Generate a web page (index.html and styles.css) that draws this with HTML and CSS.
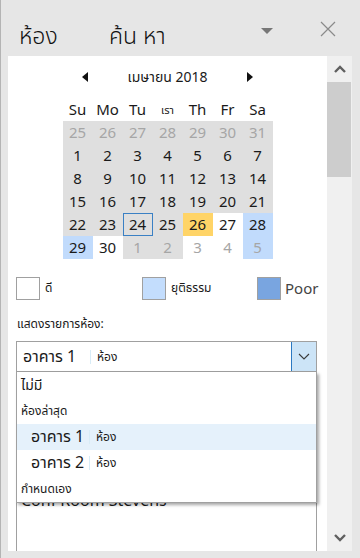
FILE: index.html
```html
<!DOCTYPE html>
<html>
<head>
<meta charset="UTF-8">
<title>Rooms</title>
<meta name="viewport" content="width=device-width, initial-scale=1.0">
<link rel="stylesheet" href="styles.css">
</head>
<body>
<div class="header">
  <span class="title">ห้อง</span>
  <span class="title search">ค้น หา</span>
  <span class="caret"></span>
  <svg class="close" width="16" height="16" viewBox="0 0 16 16"><path d="M1 1 L15 15 M15 1 L1 15" stroke="#8a8a8a" stroke-width="1.2" fill="none"/></svg>
</div>
<div class="main">
  <div class="panel">
    <div class="calendar">
      <div class="month">
        <span class="arrow prev"></span>
        <span class="month-name">เมษายน 2018</span>
        <span class="arrow next"></span>
      </div>
      <div class="weekdays">
        <span>Su</span><span>Mo</span><span>Tu</span><span class="thai">เรา</span><span>Th</span><span>Fr</span><span>Sa</span>
      </div>
      <div class="grid">
        <span class="out">25</span><span class="out">26</span><span class="out">27</span><span class="out">28</span><span class="out">29</span><span class="out">30</span><span class="out">31</span>
        <span>1</span><span>2</span><span>3</span><span>4</span><span>5</span><span>6</span><span>7</span>
        <span>8</span><span>9</span><span>10</span><span>11</span><span>12</span><span>13</span><span>14</span>
        <span>15</span><span>16</span><span>17</span><span>18</span><span>19</span><span>20</span><span>21</span>
        <span>22</span><span>23</span><span class="today">24</span><span>25</span><span class="busy">26</span><span class="free">27</span><span class="fair">28</span>
        <span class="fair">29</span><span class="free">30</span><span class="out">1</span><span class="out">2</span><span class="out free">3</span><span class="out free">4</span><span class="out fair">5</span>
      </div>
    </div>
    <div class="legend">
      <div class="key good"><span class="swatch"></span><span class="key-text">ดี</span></div>
      <div class="key mid"><span class="swatch fair"></span><span class="key-text">ยุติธรรม</span></div>
      <div class="key bad"><span class="swatch poor"></span><span class="key-text latin">Poor</span></div>
    </div>
    <div class="label">แสดงรายการห้อง:</div>
    <div class="select">
      <span class="building">อาคาร 1</span>
      <span class="sep"></span>
      <span class="room">ห้อง</span>
      <span class="select-btn">
        <svg width="12" height="8" viewBox="0 0 12 8"><path d="M1 1 L6 6 L11 1" stroke="#3a3a3a" stroke-width="1.1" fill="none"/></svg>
      </span>
    </div>
    <div class="rooms">Conf Room Stevens</div>

    <div class="dropdown">
      <div class="opt head strong">ไม่มี</div>
      <div class="opt head">ห้องล่าสุด</div>
      <div class="opt item selected"><span class="building">อาคาร 1</span><span class="sep"></span><span class="room">ห้อง</span></div>
      <div class="opt item"><span class="building">อาคาร 2</span><span class="sep"></span><span class="room">ห้อง</span></div>
      <div class="opt head">กำหนดเอง</div>
    </div>
  </div>
  <div class="scrollbar">
    <div class="sb-btn">
      <svg width="12" height="8" viewBox="0 0 12 8"><path d="M1 7 L6 2 L11 7" stroke="#606060" stroke-width="2.4" fill="none"/></svg>
    </div>
    <div class="thumb"></div>
    <div class="track"></div>
    <div class="sb-btn">
      <svg width="12" height="8" viewBox="0 0 12 8"><path d="M1 1 L6 6 L11 1" stroke="#606060" stroke-width="2.4" fill="none"/></svg>
    </div>
  </div>
</div>
</body>
</html>
```

FILE: styles.css
```css
*{
    box-sizing: border-box;
}
body{
    margin: 0;
    width: 360px;
    height: 558px;
    overflow: hidden;
    background: #e6e6e6;
    font-family: "Noto Sans", "Noto Sans Thai", "Open Sans", sans-serif;
    color: #1a1a1a;
    border-left: 1px solid #b4b4b4;
}
.header{
    height: 56px;
    display: flex;
    align-items: flex-end;
    padding-left: 18px;
    padding-bottom: 8px;
}
.title{
    font-size: 23px;
    line-height: 26px;
    color: #111;
    font-weight: 300;
    width: 90px;
}
.search{
    width: 152px;
}
.caret{
    width: 0;
    height: 0;
    border-left: 6px solid transparent;
    border-right: 6px solid transparent;
    border-top: 6px solid #777;
    margin-bottom: 14px;
}
.close{
    margin-left: 47px;
    margin-bottom: 11px;
}
.main{
    display: flex;
    height: 495px;
    padding-left: 7px;
}
.panel{
    position: relative;
    width: 319px;
    background: #fff;
    display: flex;
    flex-direction: column;
    overflow: hidden;
}
.calendar{
    width: 210px;
    margin: 0 auto;
}
.month{
    height: 42px;
    display: flex;
    align-items: center;
    justify-content: space-between;
    padding: 0 19px;
    font-size: 14px;
}
.arrow{
    width: 0;
    height: 0;
    border-top: 5px solid transparent;
    border-bottom: 5px solid transparent;
}
.prev{
    border-right: 6px solid #111;
}
.next{
    border-left: 6px solid #111;
}
.weekdays, .grid{
    display: grid;
    grid-template-columns: repeat(7, 30px);
}
.weekdays span{
    height: 23px;
    line-height: 23px;
    text-align: center;
    font-size: 15px;
}
.weekdays .thai{
    font-size: 11px;
}
.grid{
    background: #dfdfdf;
}
.grid span{
    height: 23px;
    line-height: 23px;
    text-align: center;
    font-size: 15px;
}
.grid .out{
    color: #a6a6a6;
}
.grid .free{
    background: #fff;
}
.grid .fair{
    background: #c1dbfc;
}
.grid .busy{
    background: #ffd467;
}
.grid .today{
    border: 1px solid #3a80c4;
    line-height: 21px;
}
.legend{
    display: flex;
    margin-top: 17px;
    padding-left: 8px;
    height: 24px;
}
.key{
    display: flex;
    align-items: center;
}
.key.good{
    width: 126px;
}
.key.mid{
    width: 115px;
}
.swatch{
    width: 24px;
    height: 23px;
    border: 1px solid #a0a0a0;
    background: #fff;
}
.swatch.fair{
    background: #c3ddfd;
}
.swatch.poor{
    background: #79a5e0;
}
.key-text{
    font-size: 12px;
    margin-left: 5px;
}
.key-text.latin{
    font-size: 15px;
    color: #444;
    margin-left: 4px;
}
.label{
    font-size: 12px;
    margin: 15px 0 0 9px;
    height: 26px;
}
.select{
    display: flex;
    align-items: center;
    margin-left: 8px;
    width: 301px;
    height: 31px;
    border: 1px solid #a0a0a0;
}
.building{
    font-size: 16px;
    padding-left: 6px;
    width: 73px;
}
.sep{
    width: 1px;
    height: 14px;
    background: #d8ecf7;
}
.room{
    font-size: 12px;
    margin-left: 6px;
}
.select-btn{
    margin-left: auto;
    width: 25px;
    height: 29px;
    background: #cce4f7;
    border-left: 1px solid #2b79c2;
    display: flex;
    align-items: center;
    justify-content: center;
}
.rooms{
    flex: 1;
    margin: 110px 0 0 8px;
    width: 301px;
    border: 1px solid #a0a0a0;
    border-bottom: none;
    padding: 7px 4px;
    font-size: 16px;
    line-height: 20px;
}
.dropdown{
    position: absolute;
    left: 8px;
    top: 316px;
    width: 301px;
    height: 131px;
    background: #fff;
    border: 1px solid #a0a0a0;
    border-top: none;
    box-shadow: 2px 2px 3px rgba(0, 0, 0, 0.35);
}
.opt{
    height: 26px;
    display: flex;
    align-items: center;
}
.head{
    font-size: 12px;
    padding-left: 4px;
}
.strong{
    font-size: 14px;
}
.item .building{
    padding-left: 14px;
    width: 72px;
}
.selected{
    background: #e5f1fb;
}
.scrollbar{
    width: 25px;
    background: #f0f0f0;
    display: flex;
    flex-direction: column;
}
.sb-btn{
    height: 26px;
    display: flex;
    align-items: center;
    justify-content: center;
}
.thumb{
    height: 95px;
    width: 24px;
    background: #cdcdcd;
}
.track{
    flex: 1;
}
```
